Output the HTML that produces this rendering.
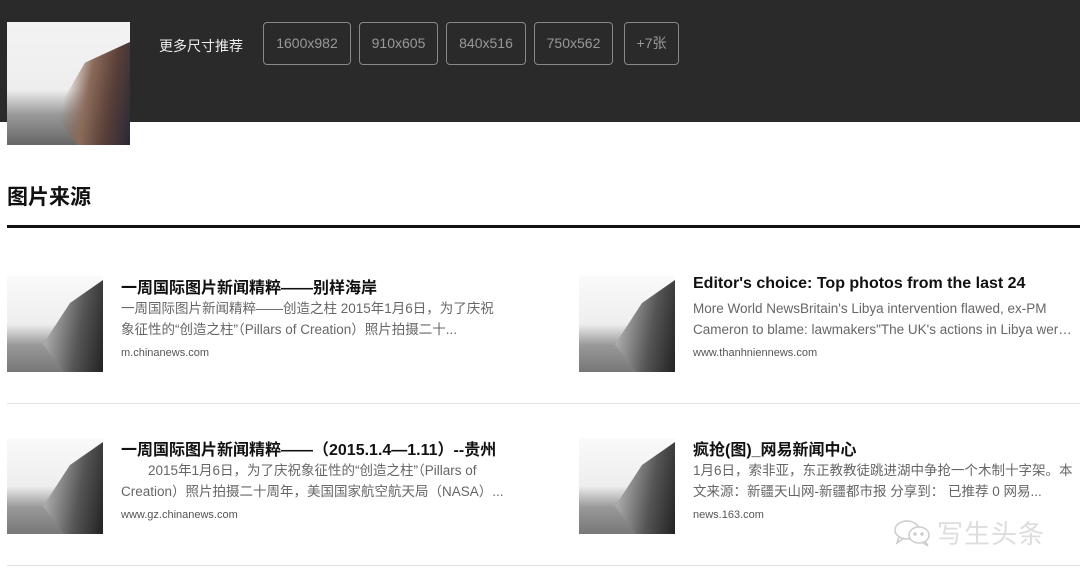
<!DOCTYPE html>
<html><head><meta charset="utf-8"><style>
*{margin:0;padding:0;box-sizing:border-box}
body{width:1080px;height:578px;overflow:hidden;background:#fff;font-family:"Liberation Sans","Noto Sans CJK SC",sans-serif;position:relative}
.hdr{position:absolute;left:0;top:0;width:1080px;height:122px;background:#2a2a2a}
.big{position:absolute;left:7px;top:22px;width:123px;height:123px;background:linear-gradient(180deg,#f3f3f3 0%,#eee 55%,#9a9a9a 75%,#666 100%)}
.big::after{content:"";position:absolute;right:0;top:20px;width:75px;height:103px;background:linear-gradient(100deg,rgba(0,0,0,0) 0%,rgba(0,0,0,0) 20%,#8a6a5a 45%,#5a4038 70%,#2a2838 100%);clip-path:polygon(100% 0,100% 100%,30% 100%,0 70%,40% 20%)}
.lbl{position:absolute;left:159px;top:36px;color:#eee;font-size:14px}
.btn{position:absolute;top:22px;height:43px;border:1px solid #888;border-radius:4px;color:#999;font-size:14px;line-height:41px;text-align:center}
h2{position:absolute;left:7px;top:181px;font-size:21px;font-weight:bold;color:#111}
.rule{position:absolute;left:7px;top:225px;width:1073px;height:3px;background:#111}
.sep{position:absolute;left:7px;width:1073px;height:1px;background:#e2e2e2}
.th{position:absolute;width:96px;height:96px;background:linear-gradient(180deg,#fafafa 0%,#eee 50%,#999 72%,#777 100%)}
.th::after{content:"";position:absolute;right:0;top:4px;width:60px;height:92px;background:linear-gradient(100deg,#ccc,#555 60%,#222);clip-path:polygon(100% 0,100% 100%,35% 100%,0 70%,45% 25%)}
.t{position:absolute;font-size:16px;font-weight:bold;color:#111;white-space:nowrap}
.d{position:absolute;font-size:13.5px;color:#666;line-height:21px;width:385px;height:42px;overflow:hidden;white-space:nowrap}
.u{position:absolute;font-size:11px;color:#555}
.wm{position:absolute;left:893px;top:514px;font-size:26px;color:#ddd;letter-spacing:1px;display:flex;align-items:center;gap:4px}
</style></head><body>
<div class="hdr"></div>
<div class="big"></div>
<div class="lbl">更多尺寸推荐</div>
<div class="btn" style="left:263px;width:88px">1600x982</div>
<div class="btn" style="left:359px;width:79px">910x605</div>
<div class="btn" style="left:446px;width:80px">840x516</div>
<div class="btn" style="left:534px;width:79px">750x562</div>
<div class="btn" style="left:624px;width:55px">+7张</div>
<h2>图片来源</h2>
<div class="rule"></div>

<div class="th" style="left:7px;top:276px"></div>
<div class="t" style="left:121px;top:274px">一周国际图片新闻精粹——别样海岸</div>
<div class="d" style="left:121px;top:298px">一周国际图片新闻精粹——创造之柱 2015年1月6日，为了庆祝<br>象征性的“创造之柱”（Pillars of Creation）照片拍摄二十...</div>
<div class="u" style="left:121px;top:347px">m.chinanews.com</div>

<div class="th" style="left:579px;top:276px"></div>
<div class="t" style="left:693px;top:275px">Editor's choice: Top photos from the last 24</div>
<div class="d" style="left:693px;top:298px;width:380px">More World NewsBritain's Libya intervention flawed, ex-PM<br>Cameron to blame: lawmakers"The UK's actions in Libya wer…</div>
<div class="u" style="left:693px;top:347px">www.thanhniennews.com</div>

<div class="sep" style="top:403px"></div>

<div class="th" style="left:7px;top:438px"></div>
<div class="t" style="left:121px;top:436px">一周国际图片新闻精粹——（2015.1.4—1.11）--贵州</div>
<div class="d" style="left:121px;top:460px">　　2015年1月6日，为了庆祝象征性的“创造之柱”（Pillars of<br>Creation）照片拍摄二十周年，美国国家航空航天局（NASA）...</div>
<div class="u" style="left:121px;top:509px">www.gz.chinanews.com</div>

<div class="th" style="left:579px;top:438px"></div>
<div class="t" style="left:693px;top:436px">疯抢(图)_网易新闻中心</div>
<div class="d" style="left:693px;top:460px">1月6日，索非亚，东正教教徒跳进湖中争抢一个木制十字架。本<br>文来源：新疆天山网-新疆都市报 分享到： 已推荐 0 网易...</div>
<div class="u" style="left:693px;top:509px">news.163.com</div>

<div class="sep" style="top:565px"></div>
<div class="wm"><svg width="40" height="28" viewBox="0 0 40 28" fill="none" stroke="#ccc" stroke-width="1.5"><ellipse cx="14" cy="11" rx="12" ry="9"/><path d="M6 18 L4 24 L11 19"/><ellipse cx="26" cy="16" rx="10" ry="8" fill="#fff"/><path d="M32 22 L35 27 L29 23"/><circle cx="22" cy="15" r="1" fill="#ccc"/><circle cx="29" cy="15" r="1" fill="#ccc"/></svg><span>写生头条</span></div>
</body></html>
